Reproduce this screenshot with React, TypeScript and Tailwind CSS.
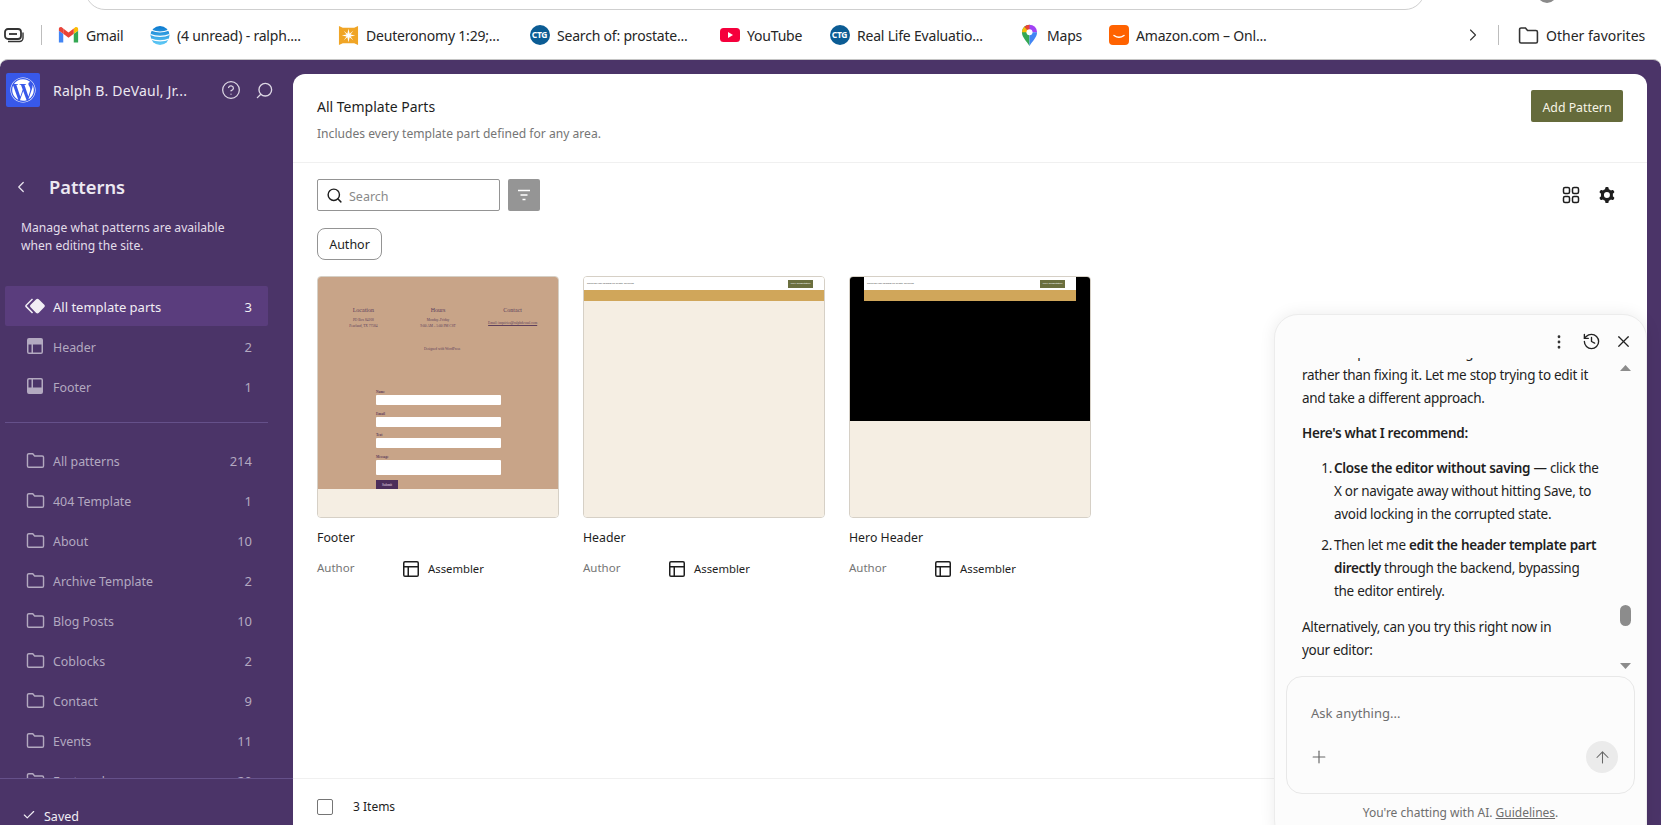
import { ArrowUp, Check, ChevronLeft, ChevronRight, CircleHelp, History, MoreVertical, Plus, Search, X } from "lucide-react";
import { FaWordpress } from "react-icons/fa";

const topParts = [
  { label: "Header", count: 2, icon: "header" },
  { label: "Footer", count: 1, icon: "footer" },
];

const folders = [
  ["All patterns", 214],
  ["404 Template", 1],
  ["About", 10],
  ["Archive Template", 2],
  ["Blog Posts", 10],
  ["Coblocks", 2],
  ["Contact", 9],
  ["Events", 11],
  ["Featured", 20],
];

function WpIcon({ d, className }: { d: string; className?: string }) {
  return (
    <svg viewBox="0 0 24 24" className={className} fill="currentColor">
      <path fillRule="evenodd" clipRule="evenodd" d={d} />
    </svg>
  );
}

const headerPath = "M18.5 10.5H10v8h8a.5.5 0 00.5-.5v-7.5zm-10 0h-3V18a.5.5 0 00.5.5h2.5v-8zM6 4h12a2 2 0 012 2v12a2 2 0 01-2 2H6a2 2 0 01-2-2V6a2 2 0 012-2z";
const footerPath = "M18 5.5h-8v8h8.5V6a.5.5 0 00-.5-.5zm-9.5 8h-3V6a.5.5 0 01.5-.5h2.5v8zM6 4h12a2 2 0 012 2v12a2 2 0 01-2 2H6a2 2 0 01-2-2V6a2 2 0 012-2z";
const layoutPath = "M18 5.5H6a.5.5 0 00-.5.5v3h13V6a.5.5 0 00-.5-.5zm.5 5H10v8h8a.5.5 0 00.5-.5v-7.5zm-10 0h-3V18a.5.5 0 00.5.5h2.5v-8zM6 4h12a2 2 0 012 2v12a2 2 0 01-2 2H6a2 2 0 01-2-2V6a2 2 0 012-2z";
const symbolPath = "M21.3 10.8l-5.6-5.6c-.7-.7-1.8-.7-2.5 0l-5.6 5.6c-.7.7-.7 1.8 0 2.5l5.6 5.6c.3.3.8.5 1.2.5s.9-.2 1.2-.5l5.6-5.6c.8-.7.8-1.9.1-2.5zm-17.6 1L10 5.5l-1-1-6.3 6.3c-.7.7-.7 1.8 0 2.5L9 19.5l1.1-1.1-6.3-6.3c-.2 0-.2-.2-.1-.3z";
const cogPath = "M10.289 4.836A1 1 0 0111.275 4h1.306a1 1 0 01.987.836l.244 1.466c.787.26 1.503.679 2.108 1.218l1.393-.522a1 1 0 011.216.437l.653 1.13a1 1 0 01-.23 1.273l-1.148.944a6.025 6.025 0 010 2.435l1.149.946a1 1 0 01.23 1.272l-.653 1.13a1 1 0 01-1.216.437l-1.394-.522c-.605.54-1.32.958-2.108 1.218l-.244 1.466a1 1 0 01-.987.836h-1.306a1 1 0 01-.986-.836l-.244-1.466a5.995 5.995 0 01-2.108-1.218l-1.394.522a1 1 0 01-1.217-.436l-.653-1.131a1 1 0 01.23-1.272l1.149-.946a6.026 6.026 0 010-2.435l-1.148-.944a1 1 0 01-.23-1.272l.653-1.131a1 1 0 011.217-.437l1.393.522a5.994 5.994 0 012.108-1.218l.244-1.466zM14.929 12a3 3 0 11-6 0 3 3 0 016 0z";

function FolderIcon({ className }: { className?: string }) {
  return (
    <svg viewBox="0 0 20 18" className={className} fill="none" stroke="currentColor" strokeWidth="1.5">
      <path d="M1.5 3.2a1.4 1.4 0 011.4-1.4h4.2l2 2.4h8a1.4 1.4 0 011.4 1.4v9.2a1.4 1.4 0 01-1.4 1.4H2.9a1.4 1.4 0 01-1.4-1.4z" />
    </svg>
  );
}

function GmailIcon() {
  return (
    <svg viewBox="0 0 24 20" className="w-[21px] h-[18px]">
      <path d="M1 18.5V5l5 3.6v10z" fill="#4285f4" />
      <path d="M23 18.5V5l-5 3.6v10z" fill="#34a853" />
      <path d="M18 2.5v6.1L23 5V3c0-2-2.2-2.8-3.6-1.6z" fill="#fbbc04" />
      <path d="M6 8.6V2.5L12 7l6-4.5v6.1L12 13z" fill="#ea4335" />
      <path d="M1 3v2l5 3.6V2.500L4.600 1.400C3.200.2 1 1 1 3z" fill="#e8453c" />
    </svg>
  );
}

function AttIcon() {
  return (
    <svg viewBox="0 0 20 20" className="w-[20px] h-[21px]">
      <defs>
        <linearGradient id="att" x1="0" y1="0" x2="0" y2="1">
          <stop offset="0" stopColor="#0a78cf" />
          <stop offset="1" stopColor="#62cdf7" />
        </linearGradient>
      </defs>
      <circle cx="10" cy="10" r="9.500" fill="url(#att)" />
      <path d="M1.500 4.800c5 2 12 2 17 0M.6 9c5 2.400 14 2.400 18.800 0M1.200 13.600c5 2.300 13 2.300 17.600 0" stroke="#fff" strokeWidth="1.200" fill="none" />
    </svg>
  );
}

function StarIcon() {
  return (
    <svg viewBox="0 0 22 22" className="w-[21px] h-[21px]">
      <path d="M1 1l4 2h12l4-2v20l-4-2H5l-4 2z" fill="#f0a526" />
      <path d="M11 4l1.200 5.100L16 6l-2.900 3.900L18 11l-4.900 1.100L16 16l-3.800-3.100L11 18l-1.200-5.100L6 16l2.900-3.900L4 11l4.900-1.100L6 6l3.800 3.100z" fill="#fff" />
    </svg>
  );
}

function CtgIcon() {
  return (
    <span className="flex items-center justify-center w-[20px] h-[20px] rounded-full bg-[#0b5c94] text-white text-[8.500px] font-bold leading-none tracking-[-0.3px]">
      CTG
    </span>
  );
}

function YoutubeIcon() {
  return (
    <svg viewBox="0 0 20 14" className="w-[20px] h-[14px]">
      <rect width="20" height="14" rx="3.500" fill="#f5003c" />
      <path d="M8 4l5 3-5 3z" fill="#fff" />
    </svg>
  );
}

function MapsIcon() {
  return (
    <svg viewBox="0 0 18 24" className="w-[17px] h-[23px]">
      <path d="M9 23C6 18 1 14 1 8.500A8 8 0 019 .500z" fill="#34a853" />
      <path d="M1 8.500A8 8 0 013.500 2.700L9 8.500z" fill="#fbbc04" />
      <path d="M3.500 2.700A8 8 0 019 .500l4 3-4 5z" fill="#ea4335" />
      <path d="M9 .500a8 8 0 018 8L9 8.500z" fill="#a142f4" />
      <path d="M17 8.500C17 14 12 18 9 23V8.500z" fill="#4285f4" />
      <circle cx="9" cy="8.500" r="3.200" fill="#fff" />
    </svg>
  );
}

function AmazonIcon() {
  return (
    <svg viewBox="0 0 20 20" className="w-[20px] h-[20px]">
      <rect width="20" height="20" rx="4" fill="#ff6200" />
      <path d="M5 10.500c3 2.200 7 2.200 10 0" fill="none" stroke="#fff" strokeWidth="1.500" strokeLinecap="round" />
    </svg>
  );
}

const bookmarks = [
  { label: "Gmail", icon: <GmailIcon />, width: "w-[91px]" },
  { label: "(4 unread) - ralph....", icon: <AttIcon />, width: "w-[189px]" },
  { label: "Deuteronomy 1:29;...", icon: <StarIcon />, width: "w-[191px]" },
  { label: "Search of: prostate...", icon: <CtgIcon />, width: "w-[190px]" },
  { label: "YouTube", icon: <YoutubeIcon />, width: "w-[110px]" },
  { label: "Real Life Evaluatio...", icon: <CtgIcon />, width: "w-[190px]" },
  { label: "Maps", icon: <MapsIcon />, width: "w-[89px]" },
  { label: "Amazon.com – Onl...", icon: <AmazonIcon />, width: "w-[190px]" },
];

function BrowserChrome() {
  return (
    <div className="h-[59px] bg-white shrink-0 overflow-hidden">
      <div className="h-[10px] flex items-end overflow-hidden">
        <div className="ml-[85px] w-[1340px] h-[40px] shrink-0 rounded-b-[20px] border border-[#cfcfcf] bg-white" />
        <div className="ml-[112px] w-[20px] h-[20px] shrink-0 rounded-full bg-[#8a8a8a] mb-[7px]" />
      </div>
      <div className="h-[49px] flex items-center text-[14px] text-[#262626] pt-[1px]">
        <div className="w-[41px] flex justify-end pr-[17px] shrink-0">
          <svg viewBox="0 0 20 15" className="w-[20px] h-[15px]" fill="none" stroke="#333" strokeWidth="1.800">
            <rect x="1" y="1" width="16" height="10" rx="3" />
            <path d="M5 6h8" />
            <path d="M19 4.500v5.500a3.500 3.500 0 01-3.500 3.500H4" strokeWidth="1.400" />
          </svg>
        </div>
        <div className="w-px h-[20px] bg-[#bdbdbd] shrink-0" />
        <div className="flex items-center ml-[16px]">
          {bookmarks.map((b) => (
            <div key={b.label} className={`flex items-center shrink-0 ${b.width}`}>
              <span className="w-[21px] flex justify-center shrink-0">{b.icon}</span>
              <span className="ml-[7px] whitespace-nowrap tracking-[-0.2px]">{b.label}</span>
            </div>
          ))}
        </div>
        <ChevronRight className="w-[20px] h-[20px] text-[#333] ml-[165px] shrink-0" strokeWidth={1.300} />
        <div className="w-px h-[20px] bg-[#bdbdbd] ml-[15px] shrink-0" />
        <FolderIcon className="w-[21px] h-[19px] text-[#333] ml-[19px] shrink-0" />
        <span className="ml-[7px] whitespace-nowrap">Other favorites</span>
      </div>
    </div>
  );
}

function Row({ label, count, icon, active }: { label: string; count: number; icon: React.ReactNode; active?: boolean }) {
  return (
    <div className={`h-[40px] mx-[5px] w-[263px] shrink-0 flex items-center rounded-[2px] pl-[18px] pr-[16px] ${active ? "bg-[#5a3d7d] text-[#f1eef4] text-[13px]" : "text-[#b3a9c0] text-[12.400px]"}`}>
      <span className="w-[26px] flex justify-center -ml-[1px] shrink-0">{icon}</span>
      <span className="ml-[5px] flex-1 whitespace-nowrap pt-[4px]">{label}</span>
      <span className="pt-[4px] text-[13px]">{count}</span>
    </div>
  );
}

function Sidebar() {
  return (
    <div className="w-[293px] shrink-0 flex flex-col text-white min-h-0">
      <div className="flex items-center pl-[6px] pt-[13px] h-[47px] shrink-0">
        <div className="w-[34px] h-[34px] rounded-[2px] bg-[#3858e9] flex items-center justify-center">
          <FaWordpress className="w-[26px] h-[26px] text-white" />
        </div>
        <span className="ml-[13px] text-[14px] tracking-[0.2px] text-[#ece8f1] whitespace-nowrap w-[136px]">Ralph B. DeVaul, Jr...</span>
        <CircleHelp className="w-[20px] h-[20px] text-[#ddd7e4] ml-[32px]" strokeWidth={1.500} />
        <Search className="w-[19px] h-[19px] text-[#ddd7e4] ml-[14px] -scale-x-100" strokeWidth={1.700} />
      </div>
      <div className="mt-[66px] flex items-center h-[28px] shrink-0">
        <ChevronLeft className="w-[18px] h-[18px] ml-[12px] text-[#e8e3ee]" strokeWidth={1.700} />
        <span className="ml-[19px] text-[18.300px] font-semibold text-[#ece8f1]">Patterns</span>
      </div>
      <p className="mt-[18px] ml-[21px] text-[12.100px] leading-[18px] text-[#e3deea] shrink-0">
        Manage what patterns are available
        <br />
        when editing the site.
      </p>
      <div className="mt-[31px] shrink-0 flex flex-col">
        <Row label="All template parts" count={3} active icon={<WpIcon d={symbolPath} className="w-[24px] h-[24px]" />} />
        {topParts.map((p) => (
          <Row key={p.label} label={p.label} count={p.count} icon={<WpIcon d={p.icon === "header" ? headerPath : footerPath} className="w-[24px] h-[24px]" />} />
        ))}
      </div>
      <div className="mt-[16px] mx-[5px] w-[263px] h-px bg-[#65508a] shrink-0" />
      <div className="mt-[17px] flex-1 min-h-0 overflow-hidden flex flex-col">
        {folders.map(([label, count]) => (
          <Row key={label as string} label={label as string} count={count as number} icon={<FolderIcon className="w-[19px] h-[17px]" />} />
        ))}
      </div>
      <div className="h-[47px] shrink-0 border-t border-[#65508a] flex items-start pt-[30px] pl-[22px] text-[12.500px] leading-[16px] text-[#f1eef4]">
        <Check className="w-[14px] h-[14px] mt-[-1px]" strokeWidth={2} />
        <span className="ml-[8px]">Saved</span>
      </div>
    </div>
  );
}

function FooterPreview() {
  return (
    <div className="h-full flex flex-col bg-[#f5eee3]">
      <div className="h-[212px] bg-[#c8a488] font-['Liberation_Serif',serif] text-[#5d3f5c] overflow-hidden">
        <div className="grid grid-cols-3 pt-[29px] pl-[8px] pr-[8px] text-center">
          <div>
            <div className="text-[6px] leading-[8px]">Location</div>
            <div className="text-[3.500px] leading-[6px] mt-[3px]">PO Box 84168<br />Pearland, TX 77584</div>
          </div>
          <div>
            <div className="text-[6px] leading-[8px]">Hours</div>
            <div className="text-[3.500px] leading-[6px] mt-[3px]">Monday–Friday<br />9:00 AM – 5:00 PM CST</div>
          </div>
          <div>
            <div className="text-[6px] leading-[8px]">Contact</div>
            <div className="text-[3.500px] leading-[6px] mt-[6px] underline">Email: inquiries@ralphdevaul.com</div>
          </div>
        </div>
        <div className="text-[3.500px] leading-[5px] text-center mt-[18px] pl-[8px]">Designed with WordPress</div>
        <div className="ml-[58px] w-[125px] mt-[38px] flex flex-col text-[3.500px] leading-[4px] font-bold">
          <span>Name</span>
          <div className="h-[10px] bg-white mt-[1px] mb-[7px] rounded-[1px]" />
          <span>Email</span>
          <div className="h-[10px] bg-white mt-[1px] mb-[6px] rounded-[1px]" />
          <span>Text</span>
          <div className="h-[10px] bg-white mt-[1px] mb-[7px] rounded-[1px]" />
          <span>Message</span>
          <div className="h-[15px] bg-white mt-[1px] mb-[5px] rounded-[1px]" />
          <div className="w-[22px] h-[10px] bg-[#4b2d5a] text-[#e9dfe9] font-normal flex items-center justify-center">Submit</div>
        </div>
      </div>
    </div>
  );
}

function MiniHeader() {
  return (
    <>
      <div className="h-[13px] bg-white flex items-center pl-[3px] pr-[11px] justify-between font-['Liberation_Sans',sans-serif]">
        <span className="text-[2.500px] text-[#444] whitespace-nowrap">Ralph DeVaul designs for health, wellness</span>
        <span className="w-[25px] h-[8px] bg-[#6b6f3f] text-white text-[2.500px] flex items-center justify-center">Free Consultation</span>
      </div>
      <div className="h-[11px] bg-[#d0a65a]" />
    </>
  );
}

function HeaderPreview() {
  return (
    <div className="h-full bg-[#f5eee3]">
      <MiniHeader />
    </div>
  );
}

function HeroPreview() {
  return (
    <div className="h-full bg-[#f5eee3]">
      <div className="h-[144px] bg-black px-[14px]">
        <MiniHeader />
      </div>
    </div>
  );
}

function PartCard({ title, preview }: { title: string; preview: React.ReactNode }) {
  return (
    <div>
      <div className="h-[242px] rounded-[4px] border border-[#d6d0c6] overflow-hidden">{preview}</div>
      <div className="mt-[11px] text-[12.300px] leading-[18px] text-[#1e1e1e]">{title}</div>
      <div className="mt-[10px] flex items-center h-[24px]">
        <span className="w-[85px] text-[11.500px] pb-[2px] text-[#757575]">Author</span>
        <WpIcon d={layoutPath} className="w-[24px] h-[24px] text-[#1e1e1e] -ml-[3px]" />
        <span className="ml-[5px] text-[11.300px] text-[#1e1e1e]">Assembler</span>
      </div>
    </div>
  );
}

function Main() {
  return (
    <div className="flex-1 mr-[14px] mt-[14px] bg-white rounded-t-[12px] flex flex-col min-h-0 text-[#1e1e1e]">
      <div className="h-[89px] shrink-0 border-b border-[#f0f0f0] flex justify-between pl-[24px] pr-[24px]">
        <div>
          <div className="mt-[23px] text-[14px] leading-[20px]">All Template Parts</div>
          <div className="mt-[8px] text-[12.100px] leading-[18px] text-[#757575]">Includes every template part defined for any area.</div>
        </div>
        <div className="mt-[16px] w-[92px] h-[32px] pt-[4px] rounded-[2px] bg-[#656b3b] text-[#f7f5e6] text-[12.300px] flex items-center justify-center">Add Pattern</div>
      </div>
      <div className="pt-[16px] pl-[24px] pr-[28px] flex-1 min-h-0">
        <div className="flex items-center h-[32px]">
          <div className="w-[183px] h-[32px] border border-[#949494] rounded-[2px] flex items-center pl-[8px]">
            <Search className="w-[17px] h-[17px] text-[#1e1e1e]" strokeWidth={2} />
            <span className="ml-[6px] pt-[4px] text-[12.500px] text-[#8a8a8a]">Search</span>
          </div>
          <div className="ml-[8px] w-[32px] h-[32px] rounded-[2px] bg-[#959595] flex items-center justify-center">
            <svg viewBox="0 0 14 12" className="w-[14px] h-[12px]" fill="none" stroke="#fff" strokeWidth="1.300">
              <path d="M1 1.500h12M3.500 6h7M5.500 10.500h3" />
            </svg>
          </div>
          <div className="ml-auto flex items-center">
            <svg viewBox="0 0 18 18" className="w-[18px] h-[18px]" fill="none" stroke="#1e1e1e" strokeWidth="1.500">
              <rect x="1.500" y="1.500" width="6" height="6" rx="1.500" />
              <rect x="10.500" y="1.500" width="6" height="6" rx="1.500" />
              <rect x="1.500" y="10.500" width="6" height="6" rx="1.500" />
              <rect x="10.500" y="10.500" width="6" height="6" rx="1.500" />
            </svg>
            <WpIcon d={cogPath} className="w-[24px] h-[24px] ml-[15px] text-[#1e1e1e]" />
          </div>
        </div>
        <div className="mt-[17px] w-[65px] h-[32px] pt-[2px] rounded-[8px] border border-[#949494] flex items-center justify-center text-[12.500px]">Author</div>
        <div className="mt-[16px] grid grid-cols-[242px_242px_242px] gap-x-[24px]">
          <PartCard title="Footer" preview={<FooterPreview />} />
          <PartCard title="Header" preview={<HeaderPreview />} />
          <PartCard title="Hero Header" preview={<HeroPreview />} />
        </div>
      </div>
      <div className="h-[47px] shrink-0 border-t border-[#f0f0f0] flex items-center pl-[24px] pt-[10px]">
        <span className="w-[16px] h-[16px] rounded-[2px] border border-[#757575]" />
        <span className="ml-[20px] text-[12px]">3 Items</span>
      </div>
    </div>
  );
}

function ChatPanel() {
  return (
    <div className="absolute right-[14px] top-[314px] w-[373px] h-[530px] rounded-[24px] border border-[#ececec] bg-[#fcfcfc] shadow-[0_0_16px_rgba(0,0,0,0.08)] flex flex-col text-[#1f1f1f]">
      <div className="h-[43px] shrink-0 flex items-center justify-end pr-[13px] pt-[10px]">
        <MoreVertical className="w-[18px] h-[18px] text-[#333]" strokeWidth={1.700} />
        <History className="w-[19px] h-[19px] ml-[14px] text-[#222]" strokeWidth={1.700} />
        <X className="w-[19px] h-[19px] ml-[13px] text-[#222]" strokeWidth={1.500} />
      </div>
      <div className="relative h-[310px] shrink-0 overflow-hidden">
        <div className="-mt-[17px] pl-[27px] text-[13.500px] leading-[23px] tracking-[-0.3px] whitespace-nowrap">
          <p>The file's part is now making it worse</p>
          <p>rather than fixing it. Let me stop trying to edit it<br />and take a different approach.</p>
          <p className="mt-[12px] font-semibold">Here's what I recommend:</p>
          <ol className="mt-[12px] flex flex-col gap-y-[8px]">
            <li className="flex">
              <span className="w-[32px] text-right pr-[2px]">1.</span>
              <span><b className="font-semibold">Close the editor without saving</b> — click the<br />X or navigate away without hitting Save, to<br />avoid locking in the corrupted state.</span>
            </li>
            <li className="flex">
              <span className="w-[32px] text-right pr-[2px]">2.</span>
              <span>Then let me <b className="font-semibold">edit the header template part</b><br /><b className="font-semibold">directly</b> through the backend, bypassing<br />the editor entirely.</span>
            </li>
          </ol>
          <p className="mt-[13px]">Alternatively, can you try this right now in<br />your editor:</p>
        </div>
      </div>
      <div className="absolute right-[15px] top-[50px] w-[11px] h-[6px] bg-[#8c8c8c] [clip-path:polygon(50%_0,100%_100%,0_100%)]" />
      <div className="absolute right-[15px] top-[348px] w-[11px] h-[6px] bg-[#8c8c8c] [clip-path:polygon(50%_100%,100%_0,0_0)]" />
      <div className="absolute right-[15px] top-[290px] w-[11px] h-[21px] rounded-full bg-[#8c8c8c]" />
      <div className="mt-[8px] mx-[11px] h-[118px] shrink-0 rounded-[16px] border border-[#e8e8e8] flex flex-col pl-[24px] pr-[16px]">
        <span className="mt-[26px] text-[13px] leading-[20px] text-[#6e6e6e]">Ask anything...</span>
        <div className="mt-[18px] flex items-center justify-between">
          <Plus className="w-[20px] h-[20px] -ml-[2px] text-[#666]" strokeWidth={1.400} />
          <span className="w-[32px] h-[32px] rounded-full bg-[#ebebeb] flex items-center justify-center">
            <ArrowUp className="w-[19px] h-[19px] text-[#666]" strokeWidth={1.300} />
          </span>
        </div>
      </div>
      <div className="mt-[11px] text-center text-[12px] leading-[16px] text-[#6e6e6e]">
        You're chatting with AI. <span className="underline">Guidelines</span>.
      </div>
    </div>
  );
}

export default function App() {
  return (
    <div className="relative h-screen w-full overflow-hidden bg-white flex flex-col font-['Noto_Sans',sans-serif]">
      <BrowserChrome />
      <div className="flex-1 min-h-0 flex bg-[#4b3468] rounded-t-[8px] border-t border-[#c4c4c4]">
        <Sidebar />
        <Main />
      </div>
      <ChatPanel />
    </div>
  );
}
